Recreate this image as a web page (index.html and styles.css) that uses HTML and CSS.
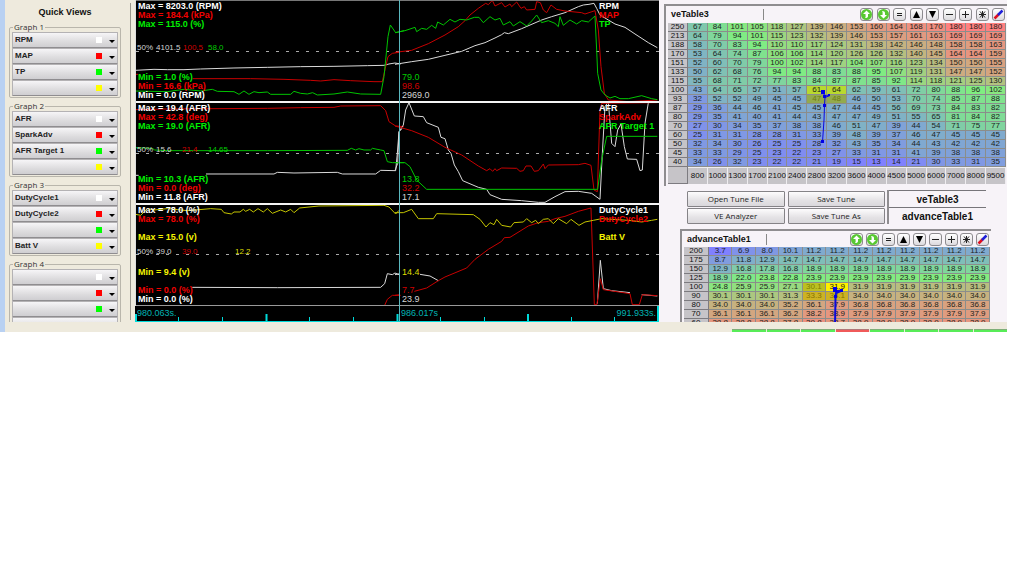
FILE: index.html
```html
<!DOCTYPE html>
<html lang="en">
<head>
<meta charset="utf-8">
<title>Tune log viewer</title>
<link rel="stylesheet" href="styles.css">
</head>
<body>
<main class="app">
  <div class="workspace">
    <aside class="sidebar">
      <div class="views" id="views"><h1 class="views-title">Quick Views</h1></div>
    </aside>

    <section class="charts" aria-label="Log graphs">
      <svg class="plot" viewBox="135 0 524 322" role="img" aria-label="Engine log traces">
        <rect x="135" y="0" width="524" height="322" fill="#000"/>
        <g class="midline">
          <path d="M136 51.5H659M136 153.5H659M136 254.5H659"/>
        </g>
        <g class="trace" transform="translate(134 0) scale(.33333)">
          <polyline class="w" points="4,211 60,208 100,209 150,209 200,207 300,204 400,202 500,200 600,199 700,197 750,196 765,192 783,189 800,192"/>
          <polyline class="r" points="0,223 12,223"/>
          <polyline class="r" points="175,236 350,236 450,238 530,241 560,243 600,239 650,242 720,245 745,245 755,200 762,170 775,160 795,157"/>
          <polyline class="g" points="0,273 100,275 150,268 200,273 235,268 250,274 300,275 315,283 330,273 345,283 360,275 375,278 400,276 410,283 470,283 480,274 500,280 520,282 536,278 550,285 600,282 640,276 680,282 740,283 750,230 762,110 769,75 785,98 810,92"/>
        </g>
        <g class="trace" transform="translate(395 0) scale(.33333)">
          <polyline class="w" points="0,193 50,185 100,178 150,166 200,154 240,137 270,128 300,114 320,104 328,98 340,101 380,86 440,60 470,50 510,38 550,20 565,15 582,13 597,10 605,25 615,45 640,60 660,72 690,82 720,102 760,128 787,143"/>
          <polyline class="r" points="0,157 50,151 100,131 150,105 190,80 210,62 225,45 250,25 272,10 280,14 292,1 300,18 320,8 330,21 345,12 350,20 365,6 378,25 388,20 395,30 420,28 425,5 436,8 445,30 455,38 468,15 485,28 510,33 560,38 570,42 600,32 610,90 618,200 628,280 640,300 700,305 787,300"/>
          <polyline class="g" points="0,98 30,92 60,82 65,95 80,85 95,88 110,76 122,85 128,66 145,75 165,58 180,66 195,58 215,60 238,52 252,52 265,68 285,50 300,60 315,55 325,75 345,65 355,78 375,65 395,78 410,63 425,45 440,68 460,62 480,70 490,80 495,50 505,76 525,60 545,72 560,62 580,66 600,48 605,150 608,220 618,270 630,285 645,294 660,289 675,296 700,296 740,287 770,296 787,299"/>
        </g>
        <g class="trace" transform="translate(134 100) scale(.33333)">
          <polyline class="w" points="4,226 14,226"/>
          <polyline class="w" points="216,222 420,222 430,217 480,219 610,217 625,222 725,222 740,211 785,212 790,160 795,95 805,85"/>
          <polyline class="r" points="0,29 100,27 400,25 500,23 600,22 620,18 740,17 755,32 765,65 785,78 810,80"/>
          <polyline class="g" points="0,143 55,145 62,150 100,152 400,152 640,151 652,145 665,150 675,146 690,150 710,150 715,145 740,150 750,152 760,185 775,188 810,188"/>
        </g>
        <g class="trace" transform="translate(395 100) scale(.33333)">
          <polyline class="w" points="0,212 8,190 12,95 25,75 32,30 42,8 58,48 85,50 95,68 130,82 138,112 150,116 160,150 168,160 178,195 190,215 203,242 250,262 275,268 285,284 320,298 380,302 430,307 450,307 480,290 510,275 550,274 590,280 615,298 622,160 630,20 640,5 650,130 660,140 668,90 678,72 688,140 697,177 725,178 735,212 742,210 750,70 760,8"/>
          <polyline class="r" points="0,78 50,92 100,112 150,142 200,165 250,198 275,212 285,206 293,214 300,206 305,212 320,204 365,205 375,214 385,212 393,198 408,198 418,214 430,212 445,192 450,206 460,195 550,194 570,190 588,196 597,270 607,275 615,30 620,10 787,8"/>
          <polyline class="g" points="0,188 30,188 45,200 65,240 95,268 608,268 620,180 635,109 787,109"/>
        </g>
        <g class="trace" transform="translate(134 202) scale(.33333)">
          <polyline class="w" points="175,256 430,257 740,256 752,245 760,215 775,218 783,213 795,218"/>
          <polyline class="r" points="752,310 760,292 775,280 800,280"/>
          <polyline class="y" points="5,37 20,40 40,20 60,24 100,20 160,26 230,20 262,22 270,32 292,36 300,30 318,30 328,22 335,28 347,22 358,30 372,20 388,30 400,20 415,34 440,24 455,30 470,22 480,32 497,18 555,12 750,10 765,15 785,36 795,25"/>
        </g>
        <g class="trace" transform="translate(395 202) scale(.33333)">
          <polyline class="w" points="0,218 15,215"/>
          <polyline class="w" points="75,217 105,222 130,236"/>
          <polyline class="w" points="607,305 616,175 625,260 650,266 705,272"/>
          <polyline class="w" points="740,278 787,282"/>
          <polyline class="r" points="0,280 15,278"/>
          <polyline class="r" points="58,268 95,258 130,236 150,225 215,198 240,172 280,142 320,118 328,107 345,106 400,72 430,62 460,58 480,50 510,43 550,28 588,18 598,308 606,308 616,230 625,263 705,275 712,308 733,308 742,278 787,281"/>
          <polyline class="y" points="0,32 25,32 50,22 70,50 115,50 125,35 235,38 255,52 273,75 285,62 297,68 305,52 320,70 347,75 357,62 385,60 395,50 410,62 422,55 430,65 445,52 460,50 475,65 490,50 515,65 528,52 552,70 570,60 595,55 620,50 700,55 740,60 770,55 787,52"/>
        </g>
        <path d="M135 .5H659" stroke="#777"/>
        <path d="M135 102H659M135 204H659" stroke="#f4f4f4" stroke-width="2"/>
        <path d="M135 305.500H659" stroke="#999"/>
        <path d="M135.500 0V306" stroke="#ddd"/>
        <path d="M399.500 0V321" stroke="#159aa2"/>
        <path d="M399.500 0V321" stroke="#fff" stroke-opacity=".3"/>
        <g class="axis">
          <path d="M135 321.500H659M178.500 317V321M222.500 317V321M309.500 317V321M353.500 317V321M440.500 317V321M484.500 317V321M571.500 317V321M614.500 317V321"/>
          <path d="M136 314V321M266.500 314V321M397.500 314V321M528 314V321M658 306V321" stroke-width="2"/>
          <text x="137" y="316">980.063s.</text>
          <text x="401" y="316">986.017s</text>
          <text x="656" y="316" text-anchor="end">991.933s.</text>
        </g>
        <g class="label">
          <text class="tw" x="138" y="9">Max = 8203.0 (RPM)</text>
          <text class="tr" x="138" y="18">Max = 184.4 (kPa)</text>
          <text class="tg" x="138" y="27">Max = 115.0 (%)</text>
          <text class="tg" x="138" y="80">Min = 1.0 (%)</text>
          <text class="tr" x="138" y="89">Min = 16.6 (kPa)</text>
          <text class="tw" x="138" y="98">Min = 0.0 (RPM)</text>
          <text class="tw" x="599" y="9">RPM</text>
          <text class="tr" x="599" y="18">MAP</text>
          <text class="tg" x="599" y="27">TP</text>

          <text class="tw" x="138" y="111">Max = 19.4 (AFR)</text>
          <text class="tr" x="138" y="120">Max = 42.8 (deg)</text>
          <text class="tg" x="138" y="129">Max = 19.0 (AFR)</text>
          <text class="tg" x="138" y="182">Min = 10.3 (AFR)</text>
          <text class="tr" x="138" y="191">Min = 0.0 (deg)</text>
          <text class="tw" x="138" y="200">Min = 11.8 (AFR)</text>
          <text class="tw" x="599" y="111">AFR</text>
          <text class="tr" x="599" y="120">SparkAdv</text>
          <text class="tg" x="599" y="129">AFR Target 1</text>

          <text class="tw" x="138" y="213">Max = 78.0 (%)</text>
          <text class="tr" x="138" y="222">Max = 78.0 (%)</text>
          <text class="ty" x="138" y="240">Max = 15.0 (v)</text>
          <text class="ty" x="138" y="275">Min = 9.4 (v)</text>
          <text class="tr" x="138" y="293">Min = 0.0 (%)</text>
          <text class="tw" x="138" y="302">Min = 0.0 (%)</text>
          <text class="tw" x="599" y="213">DutyCycle1</text>
          <text class="tr" x="599" y="222">DutyCycle2</text>
          <text class="ty" x="599" y="240">Batt V</text>
        </g>
        <g class="value">
          <text class="vg" x="402" y="80">79.0</text>
          <text class="vr" x="402" y="89">98.6</text>
          <text class="vw" x="402" y="98">2969.0</text>
          <text class="vg" x="402" y="182">13.8</text>
          <text class="vr" x="402" y="191">32.2</text>
          <text class="vw" x="402" y="200">17.1</text>
          <text class="vy" x="402" y="275">14.4</text>
          <text class="vr" x="402" y="293">7.7</text>
          <text class="vw" x="402" y="302">23.9</text>
        </g>
        <g class="mid">
          <text class="vw" x="137" y="50">50%</text><text class="vw" x="156" y="50">4101.5</text>
          <text class="vr" x="183" y="50">100.5</text><text class="vg" x="208" y="50">58.0</text>
          <text class="vw" x="137" y="152">50%</text><text class="vw" x="156" y="152">15.6</text>
          <text class="vr" x="182" y="152">21.4</text><text class="vg" x="208" y="152">14.65</text>
          <text class="vw" x="137" y="254">50%</text><text class="vw" x="156" y="254">39.0</text>
          <text class="vr" x="182" y="254">39.0</text><text class="vy" x="235" y="254">12.2</text>
        </g>
      </svg>
    </section>

    <section class="tuning">
      <div class="panel panel-ve">
        <header class="panel-head">
          <h2 class="panel-title">veTable3</h2>
          <div class="tools"></div>
        </header>
        <div class="grid-wrap">
          <table class="cells" id="ve"></table>
          <svg class="track" viewBox="668 23 338 161" aria-hidden="true">
            <path d="M823.500 92L824.500 96L830 95.500L825 97.500L824.500 105L824 120L822.500 142"/>
            <rect x="821" y="90" width="4" height="4"/><rect x="823" y="95" width="3" height="3"/><rect x="828" y="94" width="2" height="2"/><rect x="823" y="104" width="3" height="3"/><rect x="821" y="140" width="3" height="3"/>
          </svg>
        </div>
      </div>

      <div class="actions">
        <div class="buttons">
          <button type="button" class="action">Open Tune File</button>
          <button type="button" class="action">Save Tune</button>
          <button type="button" class="action">VE Analyzer</button>
          <button type="button" class="action">Save Tune As</button>
        </div>
        <div class="tabs">
          <button type="button" class="tab">veTable3</button>
          <button type="button" class="tab">advanceTable1</button>
        </div>
      </div>

      <div class="panel panel-adv">
        <header class="panel-head">
          <h2 class="panel-title">advanceTable1</h2>
          <div class="tools"></div>
        </header>
        <div class="grid-wrap">
          <table class="cells" id="adv"></table>
          <svg class="track" viewBox="684 247 306 81" aria-hidden="true">
            <path d="M835 289L836 291L842 290.500L836 293L835.500 297L835 328" stroke-width="2"/>
            <rect x="833" y="287" width="4" height="5"/><rect x="840" y="289" width="3" height="3"/><rect x="834" y="295" width="3" height="3"/>
          </svg>
        </div>
      </div>
    </section>
  </div>
  <footer class="status">
    <div class="lamps"><i class="lamp"></i><i class="lamp"></i><i class="lamp"></i><i class="lamp lamp-red"></i><i class="lamp"></i><i class="lamp"></i><i class="lamp"></i><i class="lamp"></i></div>
  </footer>
</main>
<script src="script.js"></script>
</body>
</html>
```
FILE: styles.css
```css
* { box-sizing: border-box; }
body {
  margin: 0;
  background: #fff;
  font-family: "Liberation Sans", Arial, sans-serif;
  color: #111;
}
.app { margin-right: 16px; }
.workspace {
  display: grid;
  grid-template-columns: 135px minmax(0, 1fr) 348px;
  height: 322px;
  overflow: hidden;
}

/* Quick views */
.sidebar {
  min-height: 0;
  overflow: hidden;
  padding: 3px 4px 0 0;
  background: #eeeadd;
  border-left: 5px solid #b9d1f2;
}
.views {
  padding: 4px 9px 0 4px;
  border-right: 1px solid #9a978e;
  height: 317px;
}
.views-title {
  margin: 0 0 3px;
  font-size: 9px;
  line-height: 11px;
  text-align: center;
}
.group {
  margin: 0 0 2px;
  padding: 0 3px;
  border: 1px solid #b9b6ac;
  border-radius: 2px;
  min-width: 0;
  height: 77px;
}
.group legend {
  padding: 0 1px;
  font: 8px/12px "Open Sans", sans-serif;
  color: #333;
}
.combo {
  display: grid;
  grid-template-columns: 1fr 8px 16px;
  align-items: center;
  margin: 0 -1px;
}
.combo:nth-of-type(1) { margin-top: -1px; }
.combo select {
  grid-area: 1 / 1 / 2 / 4;
  appearance: none;
  width: 100%;
  height: 16px;
  padding: 0 0 1px 2px;
  border: 1px solid #b4b2b4;
  border-bottom-color: #8f8d90;
  border-radius: 1px;
  background: linear-gradient(#f6f5f7, #dddcde 60%, #cfced1);
  font: bold 8px/12px "Liberation Sans", Arial, sans-serif;
  color: #222;
}
.swatch { grid-area: 1 / 2; justify-self: end; width: 6px; height: 6px; pointer-events: none; }
.white { background: #fff; }
.red { background: #f00; }
.green { background: #0f0; }
.yellow { background: #ff0; }
.arrow {
  grid-area: 1 / 3;
  justify-self: center;
  width: 0;
  margin-top: 3px;
  margin-left: 3px;
  border: 3px solid transparent;
  border-top-color: #000;
  border-bottom: 0;
  pointer-events: none;
}

/* Log plot */
.charts { background: #000; min-width: 0; }
.plot { display: block; width: 100%; height: auto; }
.plot text { font-size: 9px; }
.midline { stroke: #aaa; stroke-dasharray: 3 7; }
.trace polyline { fill: none; stroke-width: 1; vector-effect: non-scaling-stroke; }
.w { stroke: #dadada; }
.r { stroke: #c80000; }
.g { stroke: #00c400; }
.y { stroke: #c4c400; }
.plot .label text { font-weight: bold; }
.tw { fill: #fff; }
.tr { fill: #f00000; }
.tg { fill: #00f000; }
.ty { fill: #f4f400; }
.vw { fill: #d4d4d4; }
.vr { fill: #d00000; }
.vg { fill: #00cc00; }
.vy { fill: #dcdc00; }
.plot .mid text { font-size: 8px; }
.axis path { stroke: #00dada; }
.axis text { fill: #00b4b4; }

/* Tuning tables */
.tuning { background: #f7f3f8; padding-top: 4px; min-width: 0; }
.panel {
  border-top: 2px solid #8f8d90;
  border-left: 2px solid #8f8d90;
  padding: 0 1px 0 2px;
}
.panel-ve { margin-left: 5px; height: 182px; }
.panel-adv { margin: 5px 16px 0 21px; }
.panel-head {
  display: flex;
  justify-content: space-between;
  align-items: center;
  height: 17px;
  padding: 0 1px 0 3px;
}
.panel-adv .panel-head { height: 16px; }
.panel-title {
  margin: 0;
  width: 93px;
  border-right: 1px solid #888;
  font-size: 9px;
  line-height: 11px;
}
.panel-adv .panel-title { width: 80px; }
.tools { display: flex; justify-content: space-between; width: 145px; }
.panel-adv .tools { width: 139px; }
.tool {
  width: 13px;
  height: 13px;
  padding: 0;
  border: 1px solid #8d8b8f;
  border-radius: 3px;
  background: linear-gradient(#fff, #dcdade);
}
.tool svg { display: block; width: 11px; height: 11px; }
.grid-wrap { position: relative; }
.cells {
  width: 100%;
  table-layout: fixed;
  border-collapse: separate;
  border-spacing: 0;
  font-size: 8px;
  line-height: 8px;
  text-align: center;
}
.cells td, .cells th { padding: 0; font-weight: normal; white-space: nowrap; }
.cells td {
  height: 9px;
  border-right: 1px solid #8b8d8b;
  border-bottom: 1px solid #8b8d8b;
  color: #1c241c;
}
.cells .side {
  width: 20px;
  background: #c6c4c8;
  border: 0 solid #7d7b80;
  border-right-width: 1px;
  border-bottom-width: 1px;
}
.panel-adv .side { width: 25px; }
.cells .foot {
  height: 17px;
  background: #c6c4c8;
  border-right: 1px solid #efedf0;
  border-top: 1px solid #efedf0;
}
.cells .hot-1 { background: #b9d92e; }
.cells .hot-2 { background: #93aa4c; color: #6f7d10; }
.cells .hot-3 { background: #bcc022; color: #808000; }
.cells .hot-4 { background: #fff000; }
.cells .hot-5 { background: #cdb224; color: #857400; }
.track {
  position: absolute;
  inset: 0;
  width: 100%;
  pointer-events: none;
}
.track path { fill: none; stroke: #0808e0; }
.track rect { fill: #0000e8; }

/* Actions */
.actions {
  display: grid;
  grid-template-columns: 198px 1fr;
  gap: 2px;
  margin: 4px 21px 0 28px;
}
.buttons { display: grid; grid-template-columns: 1fr 1fr; gap: 1px 3px; padding-top: 1px; }
.action {
  height: 16px;
  padding: 0;
  border: 1px solid #858387;
  border-radius: 1px;
  background: linear-gradient(#fdfcfd, #e4e2e5 60%, #dad8dc);
  font: 8px/12px "Open Sans", sans-serif;
  color: #222;
}
.tabs { display: grid; border-left: 2px solid #8f8d90; }
.tab {
  padding: 0;
  border: 0;
  border-top: 1px solid #77757a;
  background: none;
  font: bold 10px/15px "Liberation Sans", Arial, sans-serif;
  color: #111;
}

/* Status strip */
.status { display: flex; justify-content: flex-end; align-items: flex-end; height: 10px; background: #eeeadd; border-left: 5px solid #b9d1f2; }
.lamps { display: grid; grid-template-columns: repeat(8, 1fr); gap: 1px; width: 275px; }
.lamp { height: 3px; background: #58ec58; border-top: 1px solid #7fae78; }
.lamp-red { background: #f05a5a; border-top-color: #b07878; }
```
FILE: script.js
```js
const views = [
  ["RPM", "MAP", "TP", ""],
  ["AFR", "SparkAdv", "AFR Target 1", ""],
  ["DutyCycle1", "DutyCycle2", "", "Batt V"],
  ["", "", "", ""]
];
const swatches = ["white", "red", "green", "yellow"];

document.getElementById("views").insertAdjacentHTML("beforeend", views.map((names, g) =>
  `<fieldset class="group"><legend>Graph ${g + 1}</legend>` + names.map((name, i) =>
    `<div class="combo"><select aria-label="Graph ${g + 1} ${swatches[i]} trace"><option>${name}</option></select>` +
    `<span class="swatch ${swatches[i]}"></span><span class="arrow"></span></div>`).join("") +
  `</fieldset>`).join(""));

const disc = arrow => `<circle cx="5.500" cy="5.500" r="5.500" fill="#58c832"/>
  <path d="${arrow}" fill="#fff"/>`;
const tools = [
  ["Increase", disc("M5.500 1.500L9 5H7V7Q7 9 4 9Q5 8 4.500 5H2Z")],
  ["Decrease", disc("M5.500 9.500L9 6H7V4Q7 2 4 2Q5 3 4.500 6H2Z")],
  ["Set equal", `<path d="M3 4.500H8M3 6.500H8" stroke="#222"/>`],
  ["Step up", `<path d="M5.500 2L9 9H2Z" fill="#000"/>`],
  ["Step down", `<path d="M5.500 9L9 2H2Z" fill="#000"/>`],
  ["Subtract", `<path d="M2 5.500H9" stroke="#222"/>`],
  ["Add", `<path d="M2 5.500H9M5.500 2V9" stroke="#222"/>`],
  ["Multiply", `<path d="M2 5.500H9M3 2.500L8 8.500M8 2.500L3 8.500M5.500 2V9" stroke="#222"/>`],
  ["Interpolate", `<path d="M1.500 9.500L5.500 5.500" stroke="#e01020" stroke-width="2.500"/><path d="M5 6L9.500 1.500" stroke="#2020d8" stroke-width="2.500"/>`]
];
document.querySelectorAll(".tools").forEach(bar => {
  bar.innerHTML = tools.map(([name, art]) =>
    `<button type="button" class="tool" aria-label="${name}"><svg viewBox="0 0 11 11">${art}</svg></button>`).join("");
});

// Blue at the low end, green in the middle, red at the high end.
function shade(value, low, high) {
  const t = Math.min(1, Math.max(0, (value - low) / (high - low))) * 2;
  const mix = (a, b, k) => Math.round(a + (b - a) * k);
  return t < 1
    ? `rgb(128,${mix(128, 238, t)},${mix(255, 128, t)})`
    : `rgb(${mix(128, 255, t - 1)},${mix(238, 128, t - 1)},128)`;
}

function fill(id, rows, low, high, hot, foot) {
  const body = rows.map(line => {
    const [side, ...values] = line.split(" ");
    return `<tr><th class="side" scope="row">${side}</th>` + values.map((v, i) => {
      const mark = hot[side + ":" + i];
      return mark ? `<td class="${mark}">${v}</td>` : `<td style="background:${shade(+v, low, high)}">${v}</td>`;
    }).join("") + "</tr>";
  }).join("");
  const last = foot ? `<tr><th class="side"></th>${foot.split(" ").map(v => `<th class="foot" scope="col">${v}</th>`).join("")}</tr>` : "";
  document.getElementById(id).innerHTML = `<tbody>${body}${last}</tbody>`;
}

fill("ve", [
  "250 67 84 101 105 118 127 139 146 153 160 164 168 170 180 180 180",
  "213 64 79 94 101 115 123 132 139 146 153 157 161 163 169 169 169",
  "188 58 70 83 94 110 110 117 124 131 138 142 146 148 158 158 163",
  "170 53 64 74 87 106 106 114 120 126 126 132 140 145 164 164 159",
  "151 52 60 70 79 100 102 114 117 104 107 116 123 134 150 150 155",
  "133 50 62 68 76 94 94 88 83 88 95 107 119 131 147 147 152",
  "115 55 68 71 72 77 83 84 87 87 85 92 114 118 121 125 130",
  "100 43 64 65 57 51 57 61 64 62 59 61 72 80 88 96 102",
  "93 32 52 52 49 45 45 47 48 46 50 53 70 74 85 87 88",
  "87 29 36 44 46 41 45 45 47 44 45 56 69 73 84 83 82",
  "80 29 35 41 40 41 44 43 47 47 49 51 55 65 81 84 82",
  "70 27 30 34 35 37 38 38 46 51 47 39 44 54 71 75 77",
  "60 25 31 31 28 28 31 33 39 48 39 37 46 47 45 45 45",
  "50 32 34 30 26 25 25 28 32 43 35 34 44 43 42 42 42",
  "45 33 33 29 25 23 22 23 27 33 31 31 41 39 38 38 38",
  "40 34 26 32 23 22 22 21 19 15 13 14 21 30 33 31 35"
], 13, 180, { "100:6": "hot-1", "100:7": "hot-1", "93:6": "hot-2", "93:7": "hot-2" },
"800 1000 1300 1700 2100 2400 2800 3200 3600 4000 4500 5000 6000 7000 8000 9500");

fill("adv", [
  "200 3.7 6.9 8.0 10.1 11.2 11.2 11.2 11.2 11.2 11.2 11.2 11.2",
  "175 8.7 11.8 12.9 14.7 14.7 14.7 14.7 14.7 14.7 14.7 14.7 14.7",
  "150 12.9 16.8 17.8 16.8 18.9 18.9 18.9 18.9 18.9 18.9 18.9 18.9",
  "125 18.9 22.0 23.8 22.8 23.9 23.9 23.9 23.9 23.9 23.9 23.9 23.9",
  "100 24.8 25.9 25.9 27.1 30.1 31.9 31.9 31.9 31.9 31.9 31.9 31.9",
  "90 30.1 30.1 30.1 31.3 33.3 34.1 34.0 34.0 34.0 34.0 34.0 34.0",
  "80 34.0 34.0 34.0 35.2 36.1 37.9 36.8 36.8 36.8 36.8 36.8 36.8",
  "70 36.1 36.1 36.1 36.2 38.2 38.9 37.9 37.9 37.9 37.9 37.9 37.9",
  "60 38.8 38.8 38.8 37.8 39.8 38.7 38.9 38.9 38.9 38.9 38.9 38.9"
], 3.7, 42.8, { "100:4": "hot-3", "100:5": "hot-4", "90:4": "hot-5", "90:5": "hot-5" });
```
